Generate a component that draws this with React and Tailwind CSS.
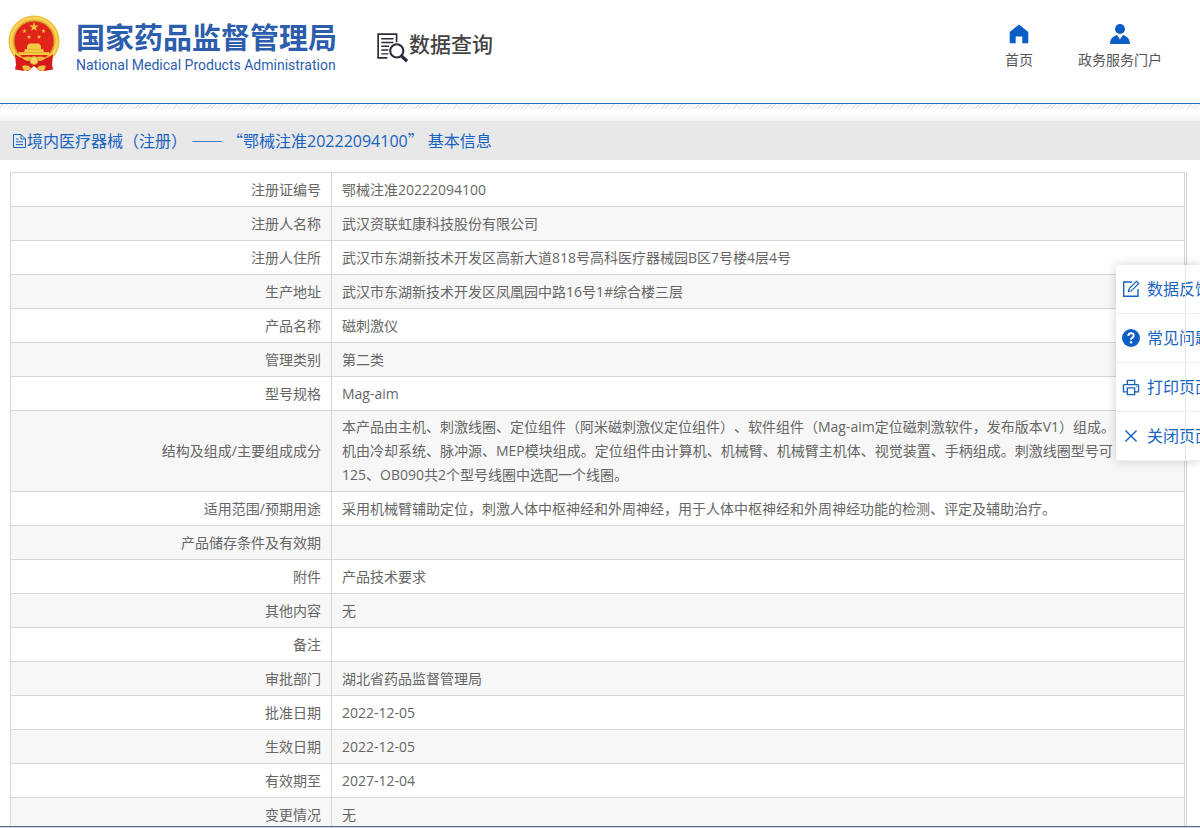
import { AiOutlinePrinter, AiOutlineClose } from 'react-icons/ai'

const rows = [
  ['注册证编号', '鄂械注准20222094100'],
  ['注册人名称', '武汉资联虹康科技股份有限公司'],
  ['注册人住所', '武汉市东湖新技术开发区高新大道818号高科医疗器械园B区7号楼4层4号'],
  ['生产地址', '武汉市东湖新技术开发区凤凰园中路16号1#综合楼三层'],
  ['产品名称', '磁刺激仪'],
  ['管理类别', '第二类'],
  ['型号规格', 'Mag-aim'],
  [
    '结构及组成/主要组成成分',
    '本产品由主机、刺激线圈、定位组件（阿米磁刺激仪定位组件）、软件组件（Mag-aim定位磁刺激软件，发布版本V1）组成。\n机由冷却系统、脉冲源、MEP模块组成。定位组件由计算机、机械臂、机械臂主机体、视觉装置、手柄组成。刺激线圈型号可\n125、OB090共2个型号线圈中选配一个线圈。',
  ],
  [
    '适用范围/预期用途',
    '采用机械臂辅助定位，刺激人体中枢神经和外周神经，用于人体中枢神经和外周神经功能的检测、评定及辅助治疗。',
  ],
  ['产品储存条件及有效期', ''],
  ['附件', '产品技术要求'],
  ['其他内容', '无'],
  ['备注', ''],
  ['审批部门', '湖北省药品监督管理局'],
  ['批准日期', '2022-12-05'],
  ['生效日期', '2022-12-05'],
  ['有效期至', '2027-12-04'],
  ['变更情况', '无'],
]

const Star = ({ x, y, r }) => (
  <path
    transform={`translate(${x} ${y}) scale(${r})`}
    d="M0-1L.24-.31.95-.31.38.12.59.81 0 .4-.59.81-.38.12-.95-.31-.24-.31Z"
    fill="#f3c23c"
  />
)

const Emblem = () => (
  <svg viewBox="0 0 52 57" className="h-[57px] w-[52px] shrink-0" aria-hidden="true">
    <circle cx="26" cy="26" r="25.5" fill="#eeb934" />
    <circle cx="26" cy="26" r="23" fill="none" stroke="#f9d25c" strokeWidth="2.5" />
    <circle cx="26" cy="26" r="20" fill="#e2231a" stroke="#cf8f22" strokeWidth="1" />
    <Star x={26} y={12} r={5} />
    <Star x={16.5} y={16} r={2.4} />
    <Star x={35.5} y={16} r={2.4} />
    <Star x={21} y={22} r={2.4} />
    <Star x={31} y={22} r={2.4} />
    <path d="M19 31l2-2.5h10l2 2.5v3h2l1 3h5l1 3H10l1-3h5l1-3h2z" fill="#f6c944" />
    <path d="M17 34.5h18M12 37.5h28" stroke="#e0a02c" strokeWidth=".7" />
    <path d="M7 39Q11 43 18 44L16 56 7 54.5 8 50zM45 39Q41 43 34 44L36 56 45 54.5 44 50z" fill="#d8191c" />
    <path d="M16 45h20l1 10-5 1-6-5-6 5-5-1z" fill="#d8191c" />
    <path d="M14 43q6-3 12 0 6-3 12 0-4 4-8 2.5h-8q-4 1.5-8-2.5z" fill="#f0be3c" />
    <circle cx="26" cy="45.5" r="4" fill="#f9d468" stroke="#d9981f" strokeWidth=".8" />
    <path d="M14 51q6-2 9 2-2 3-7 3zM38 51q-6-2-9 2 2 3 7 3z" fill="#f4c242" />
  </svg>
)

const QueryIcon = () => (
  <svg viewBox="0 0 34 32" className="size-8 shrink-0" fill="none" stroke="#2f2b3a" aria-hidden="true">
    <path d="M11 26.5H1.2V1.2H20.8V10" strokeWidth="1.8" />
    <path d="M4.5 6.2H17.5M4.5 10.2H17.5M4.5 14.2H13M4.5 18.2H12M4.5 22.2H12" strokeWidth="1.5" />
    <circle cx="21" cy="19" r="7" strokeWidth="2.2" fill="#fff" />
    <path d="M26 24.5L32 30" strokeWidth="3.6" />
  </svg>
)

const HomeIcon = () => (
  <svg viewBox="0 0 20 20" className="size-5" fill="#0b5fc4" aria-hidden="true">
    <path d="M10 .5L19.3 8V19.3H13.3V12.5H6.7V19.3H.7V8Z" />
  </svg>
)

const UserIcon = () => (
  <svg viewBox="0 0 20 20" className="size-5" fill="#0b5fc4" aria-hidden="true">
    <circle cx="10" cy="5" r="5" />
    <path d="M0 20C0 15 3 12 7 11L10 15.5 13 11C17 12 20 15 20 20Z" />
  </svg>
)

const FileIcon = () => (
  <svg viewBox="0 0 15 16" className="h-4 w-[15px] shrink-0" fill="none" stroke="currentColor" aria-hidden="true">
    <path d="M1.5 1.5H9L13.5 6V14.5H1.5ZM9 1.5V6H13.5M4 6H6.5M4 8.8H11M4 11.6H11" />
  </svg>
)

const EditIcon = () => (
  <svg viewBox="0 0 18 18" className="size-[18px]" fill="none" stroke="currentColor" strokeWidth="1.4" aria-hidden="true">
    <path d="M10 2H1.7V16.3H16V9" />
    <path d="M6.5 11.5L7.2 8.6 14.5 1.3 16.7 3.5 9.4 10.8Z" strokeWidth="1.2" />
  </svg>
)

const QuestionIcon = () => (
  <svg viewBox="0 0 18 18" className="size-[18px]" fill="none" aria-hidden="true">
    <circle cx="9" cy="9" r="9" fill="#0b5fc4" />
    <path d="M6.3 6.9Q6.3 4.3 9 4.3T11.7 6.7Q11.7 7.8 10.4 8.6 9 9.4 9 10.8" stroke="#fff" strokeWidth="1.9" />
    <circle cx="9" cy="13.2" r="1.2" fill="#fff" />
  </svg>
)

const tools = [
  { label: '数据反馈', icon: <EditIcon /> },
  { label: '常见问题', icon: <QuestionIcon /> },
  { label: '打印页面', icon: <AiOutlinePrinter size={21} /> },
  { label: '关闭页面', icon: <AiOutlineClose size={18} /> },
]

function Header() {
  return (
    <header className="flex h-[104px] shrink-0 items-start justify-between border-b border-[#2a6cc0] pr-[38px] pl-2">
      <div className="flex items-start">
        <div className="pt-[15px]">
          <Emblem />
        </div>
        <div className="pt-[17px] pl-4 text-[#2d5eae]">
          <h1 className="font-['Noto_Sans_CJK_SC',sans-serif] text-[29px] leading-[39px] font-bold">
            国家药品监督管理局
          </h1>
          <p className="font-[Roboto,sans-serif] text-[14px] leading-[18px]">
            National Medical Products Administration
          </p>
        </div>
        <div className="flex items-start pl-10">
          <div className="pt-8">
            <QueryIcon />
          </div>
          <span className="pt-[30px] font-['Noto_Sans_CJK_SC',sans-serif] text-[21px] leading-[26px] font-medium text-[#444]">
            数据查询
          </span>
        </div>
      </div>
      <nav className="flex gap-[45px] pt-6 text-[14px] leading-6 text-[#555]">
        <a href="#home" className="flex flex-col items-center">
          <HomeIcon />
          <span className="pt-1">首页</span>
        </a>
        <a href="#portal" className="flex flex-col items-center">
          <UserIcon />
          <span className="pt-1">政务服务门户</span>
        </a>
      </nav>
    </header>
  )
}

function SideTools() {
  return (
    <aside className="absolute top-[265px] right-0 w-[84px] overflow-hidden bg-white text-[#1763c2] shadow-[0_0_10px_rgba(0,0,0,0.18)]">
      {tools.map(({ label, icon }) => (
        <button
          key={label}
          className="flex h-[49px] w-full items-center gap-1.5 border-b border-[#edeff6] pl-[5px] text-[16px] whitespace-nowrap last:border-b-0"
        >
          <span className="flex w-5 shrink-0 justify-center">{icon}</span>
          <span>{label}</span>
        </button>
      ))}
      <span className="absolute inset-y-0 right-3.5 w-px bg-[#e3e7f2]" />
    </aside>
  )
}

export default function App() {
  return (
    <div
      lang="zh-CN"
      className="relative flex h-screen flex-col overflow-hidden bg-white font-['Open_Sans','Noto_Sans_CJK_SC',sans-serif] [text-spacing-trim:space-all]"
    >
      <Header />
      <div className="h-[5px] shrink-0 bg-[repeating-linear-gradient(135deg,#fff_0_2px,#e4e4e4_2px_3px)]" />
      <div className="h-3 shrink-0 bg-linear-to-b from-white from-40% to-[#f1f1f1]" />
      <h2 className="flex h-[39px] shrink-0 items-center bg-[#e8e8e8] pl-3 text-[16px] text-[#1763c2]">
        <FileIcon />
        <span>
          境内医疗器械（注册）
          <span className="px-1 font-['Noto_Sans_CJK_JP',sans-serif]">——</span>
          <span className="font-['Noto_Sans_CJK_JP',sans-serif]">“</span>
          鄂械注准20222094100
          <span className="pr-1 font-['Noto_Sans_CJK_JP',sans-serif]">”</span>
          基本信息
        </span>
      </h2>
      <main className="min-h-0 flex-1 overflow-hidden pt-3 pr-[13px] pl-2.5">
        <div className="border-r border-[#d0d0d4] pr-px">
          <table className="w-full border-collapse text-[14px] leading-6 text-[#666]">
            <tbody>
              {rows.map(([label, value]) => (
                <tr key={label} className="h-[34px] even:bg-[#f7f7f7]">
                  <th
                    scope="row"
                    className="w-[321px] border border-[#d6d6d6] px-2.5 py-1 text-right font-normal"
                  >
                    {label}
                  </th>
                  <td className="border border-[#d6d6d6] px-2.5 py-1 whitespace-pre-line">{value}</td>
                </tr>
              ))}
            </tbody>
          </table>
        </div>
      </main>
      <SideTools />
      <div className="h-0.5 shrink-0 border-t border-[#566b80] bg-[#c9d9ea]" />
    </div>
  )
}
